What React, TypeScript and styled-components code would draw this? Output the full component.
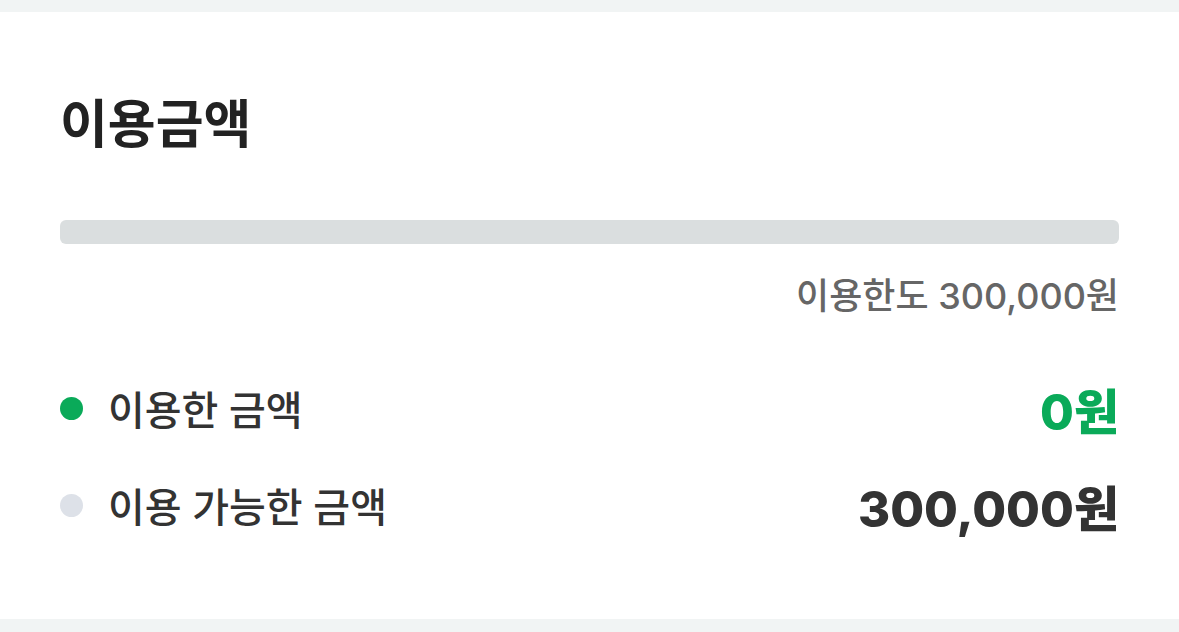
import styled, { createGlobalStyle } from "styled-components";

const GlobalStyle = createGlobalStyle`
  body {
    margin: 0;
    background: #f1f4f4;
    font-family: "Inter", "Noto Sans CJK KR", sans-serif;
  }
`;

interface UsageItem {
  label: string;
  amount: number;
  $color: string;
  $accent?: boolean;
}

const LIMIT = 300000;
const USED = 0;

const items: UsageItem[] = [
  { label: "이용한 금액", amount: USED, $color: "#0aaa59", $accent: true },
  { label: "이용 가능한 금액", amount: LIMIT - USED, $color: "#dde1e8" },
];

const won = (n: number) => `${n.toLocaleString("ko-KR")}원`;

function App() {
  const ratio = (USED / LIMIT) * 100;

  return (
    <>
      <GlobalStyle />
      <Page>
        <Card>
          <Title>이용금액</Title>
          <Track>
            <Fill style={{ width: `${ratio}%` }} />
          </Track>
          <Limit>이용한도 {won(LIMIT)}</Limit>
          <Legend>
            {items.map((item) => (
              <Row key={item.label}>
                <Label>
                  <Dot $color={item.$color} />
                  {item.label}
                </Label>
                <Amount $accent={item.$accent}>{won(item.amount)}</Amount>
              </Row>
            ))}
          </Legend>
        </Card>
      </Page>
    </>
  );
}

export default App;

const Page = styled.div`
  padding: 12px 0 13px;
`;

const Card = styled.section`
  box-sizing: border-box;
  height: 607px;
  padding: 80px 60px 0;
  background-color: white;
`;

const Title = styled.h1`
  margin: 0;
  font-size: 52px;
  font-weight: 700;
  line-height: 66px;
  color: #222;
`;

const Track = styled.div`
  margin-top: 62px;
  height: 24px;
  border-radius: 6px;
  background-color: #dadedf;
  overflow: hidden;
`;

const Fill = styled.div`
  height: 100%;
  background-color: #0aaa59;
`;

const Limit = styled.p`
  margin: 30px 0 0;
  text-align: right;
  font-size: 36px;
  font-weight: 500;
  line-height: 44px;
  color: #666;
`;

const Legend = styled.ul`
  display: grid;
  gap: 49px;
  margin: 66px 0 0;
  padding: 0;
  list-style: none;
`;

const Row = styled.li`
  display: flex;
  align-items: center;
  justify-content: space-between;
  height: 48px;
`;

const Label = styled.span`
  display: flex;
  align-items: center;
  gap: 25px;
  font-size: 40px;
  font-weight: 500;
  color: #333;
`;

const Dot = styled.i<{ $color: string }>`
  width: 23px;
  height: 23px;
  border-radius: 50%;
  background-color: ${({ $color }) => $color};
`;

const Amount = styled.strong<{ $accent?: boolean }>`
  font-size: 49px;
  font-weight: 800;
  color: ${({ $accent }) => ($accent ? "#0aaa59" : "#333")};
`;
